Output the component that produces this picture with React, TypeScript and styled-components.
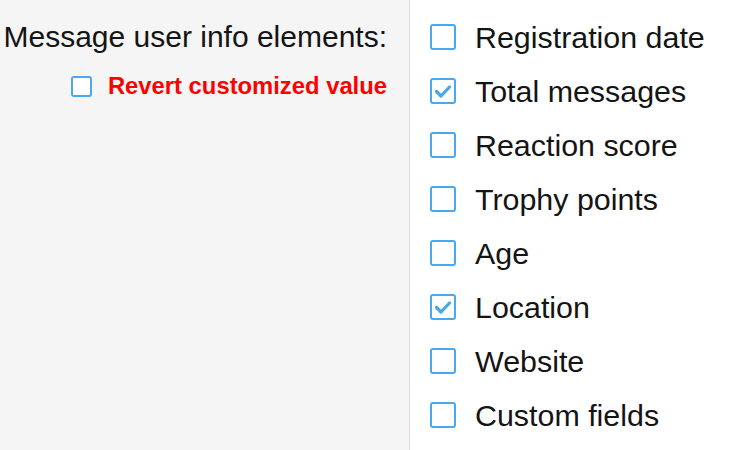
import React from "react";
import styled, { createGlobalStyle } from "styled-components";

const GlobalStyle = createGlobalStyle`
  html, body {
    margin: 0;
    padding: 0;
    background: #fff;
    font-family: "Liberation Sans", Arial, sans-serif;
  }
`;

const items = [
  { label: "Registration date", checked: false },
  { label: "Total messages", checked: true },
  { label: "Reaction score", checked: false },
  { label: "Trophy points", checked: false },
  { label: "Age", checked: false },
  { label: "Location", checked: true },
  { label: "Website", checked: false },
  { label: "Custom fields", checked: false },
];

const Check = ({ checked, size }: { checked?: boolean; size: number }) => (
  <Box size={size}>
    {checked && (
      <svg width={size - 4} height={size - 4} viewBox="0 0 22 22">
        <polyline
          points="4.5,11.5 9,16 17.5,7"
          fill="none"
          stroke="#47a7eb"
          strokeWidth="3.2"
          strokeLinecap="round"
          strokeLinejoin="round"
        />
      </svg>
    )}
  </Box>
);

const App = () => {
  return (
    <>
      <GlobalStyle />
      <Row>
        <Left>
          <Label>Message user info elements:</Label>
          <Revert>
            <Check size={21} />
            <RevertText>Revert customized value</RevertText>
          </Revert>
        </Left>
        <Right>
          {items.map((it) => (
            <Option key={it.label}>
              <Check size={26} checked={it.checked} />
              <OptionText>{it.label}</OptionText>
            </Option>
          ))}
        </Right>
      </Row>
    </>
  );
};

export default App;

const Row = styled.div`
  display: flex;
  height: 450px;
  width: 748px;
  overflow: hidden;
`;

const Left = styled.div`
  width: 410px;
  box-sizing: border-box;
  background: #f5f5f5;
  border-right: 1px solid #dcdcdc;
  padding: 10px 22px 0 0;
  display: flex;
  flex-direction: column;
  align-items: flex-end;
`;

const Label = styled.div`
  height: 54px;
  line-height: 54px;
  font-size: 30px;
  color: #141414;
  white-space: nowrap;
`;

const Revert = styled.div`
  margin-top: 10px;
  height: 24px;
  display: flex;
  align-items: center;
  gap: 16px;
`;

const RevertText = styled.span`
  font-size: 23.8px;
  font-weight: bold;
  color: #ff0000;
  white-space: nowrap;
`;

const Right = styled.div`
  flex: 1;
  background: #fff;
  padding: 10px 0 0 20px;
`;

const Option = styled.div`
  height: 54px;
  display: flex;
  align-items: center;
  gap: 19px;
`;

const OptionText = styled.span`
  font-size: 30.4px;
  color: #141414;
  white-space: nowrap;
`;

const Box = styled.span<{ size: number }>`
  box-sizing: border-box;
  width: ${({ size }) => size}px;
  height: ${({ size }) => size}px;
  border: 2.5px solid #4aa8ee;
  border-radius: 3px;
  background: #fff;
  display: inline-flex;
  align-items: center;
  justify-content: center;
  flex-shrink: 0;
`;
